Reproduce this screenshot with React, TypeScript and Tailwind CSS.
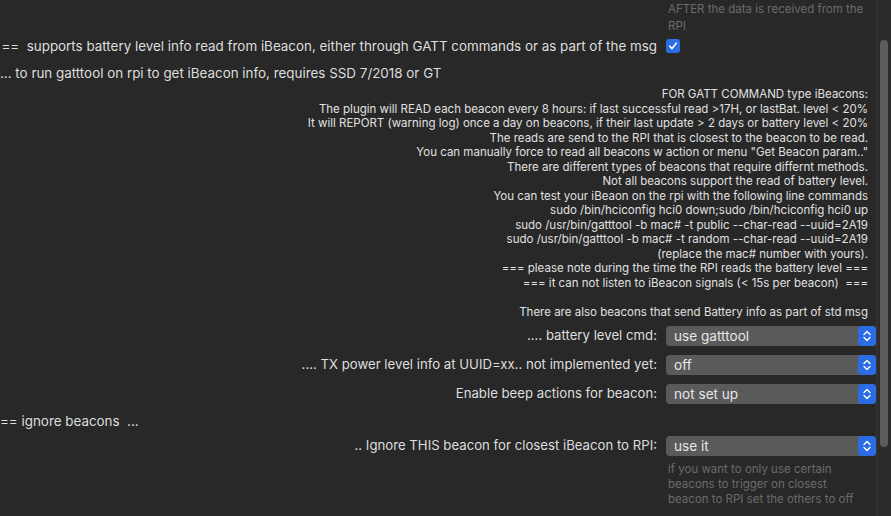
import React from "react";

const blockLines = [
  "FOR GATT COMMAND type iBeacons:",
  "The plugin will READ each beacon every 8 hours: if last successful read >17H, or lastBat. level < 20%",
  "It will REPORT (warning log) once a day on beacons, if their last update > 2 days or battery level < 20%",
  "The reads are send to the RPI that is closest to the beacon to be read.",
  'You can manually force to read all beacons w action or menu "Get Beacon param.."',
  "There are different types of beacons that require differnt methods.",
  "Not all beacons support the read of battery level.",
  "You can test your iBeaon on the rpi with the following line commands",
  "sudo /bin/hciconfig hci0 down;sudo /bin/hciconfig hci0 up",
  "sudo /usr/bin/gatttool -b mac# -t public --char-read --uuid=2A19",
  "sudo /usr/bin/gatttool -b mac# -t random --char-read --uuid=2A19",
  "(replace the mac# number with yours).",
  "=== please note during the time the RPI reads the battery level ===",
  "=== it can not listen to iBeacon signals (< 15s per beacon)  ===",
  "\u00a0",
  "There are also beacons that send Battery info as part of std msg",
];

function Chevrons() {
  return (
    <svg width="10" height="14" viewBox="0 0 10 14" fill="none">
      <path d="M2 5.5 L5 2.5 L8 5.5" stroke="white" strokeWidth="1.4" strokeLinecap="round" strokeLinejoin="round" />
      <path d="M2 8.5 L5 11.5 L8 8.5" stroke="white" strokeWidth="1.4" strokeLinecap="round" strokeLinejoin="round" />
    </svg>
  );
}

function Select({ value }: { value: string }) {
  return (
    <div className="flex h-[20px] w-[210px] items-stretch rounded-[4px] bg-[#5a5a5a]">
      <div className="flex flex-1 items-center pl-[8px] text-[13.6px] text-[#e6e6e6]">{value}</div>
      <div className="flex w-[18px] items-center justify-center rounded-[4px] bg-[#2b6ce4]">
        <Chevrons />
      </div>
    </div>
  );
}

function SelectRow({ label, value, className = "" }: { label: string; value: string; className?: string }) {
  return (
    <div className={"flex h-[22px] items-center " + className}>
      <div className="w-[657px] whitespace-nowrap text-right text-[13.2px] text-[#dedede]">{label}</div>
      <div className="ml-[9px]">
        <Select value={value} />
      </div>
    </div>
  );
}

export default function App() {
  return (
    <div
      className="flex h-[516px] w-[891px] overflow-hidden bg-[#282828]"
      style={{ fontFamily: "Inter, 'Liberation Sans', sans-serif" }}
    >
      <div className="flex w-[876px] flex-col">
        <div className="ml-[668px] mt-[-16px] text-[11.5px] leading-[17px] text-[#6b6b6b]">
          <div className="whitespace-nowrap">Changes are only visible on the page</div>
          <div className="whitespace-nowrap">AFTER the data is received from the</div>
          <div>RPI</div>
        </div>

        <div className="flex h-[22px] items-center">
          <div className="w-[657px] whitespace-nowrap text-right text-[13.4px] text-[#dedede]">
            ==&nbsp; supports battery level info read from iBeacon, either through GATT commands or as part of the msg
          </div>
          <div className="ml-[9px] flex h-[14px] w-[14px] items-center justify-center rounded-[3px] bg-[#2c6ce6]">
            <svg width="10" height="10" viewBox="0 0 10 10" fill="none">
              <path d="M1.8 5.2 L4 7.6 L8.3 2.2" stroke="white" strokeWidth="1.6" strokeLinecap="round" strokeLinejoin="round" />
            </svg>
          </div>
        </div>

        <div className="mt-[5px] flex h-[22px] items-center whitespace-nowrap text-[13.4px] text-[#dedede]">
          ... to run gatttool on rpi to get iBeacon info, requires SSD 7/2018 or GT
        </div>

        <div className="mt-[3px] pr-[8px] text-right text-[11.5px] leading-[14.5px] text-[#e0e0e0]">
          {blockLines.map((l, i) => (
            <div key={i} className="whitespace-pre">
              {l}
            </div>
          ))}
        </div>

        <div className="mt-[6px] flex flex-col gap-[7px]">
          <SelectRow label=".... battery level cmd:" value="use gatttool" />
          <SelectRow label=".... TX power level info at UUID=xx.. not implemented yet:" value="off" />
          <SelectRow label="Enable beep actions for beacon:" value="not set up" />
        </div>

        <div className="mt-[5px] flex h-[22px] items-center whitespace-nowrap text-[13.4px] text-[#dedede]">
          == ignore beacons&nbsp; ...
        </div>

        <SelectRow className="mt-[3px]" label=".. Ignore THIS beacon for closest iBeacon to RPI:" value="use it" />

        <div className="ml-[668px] mt-[5px] text-[11.5px] leading-[15px] text-[#6b6b6b]">
          <div className="whitespace-nowrap">if you want to only use certain</div>
          <div className="whitespace-nowrap">beacons to trigger on closest</div>
          <div className="whitespace-nowrap">beacon to RPI set the others to off</div>
        </div>
      </div>

      <div className="flex w-[15px] justify-center border-l border-[#363636] bg-[#2c2c2c]">
        <div className="mt-[40px] h-[407px] w-[8px] rounded-full bg-[#5c5c5c]" />
      </div>
    </div>
  );
}
